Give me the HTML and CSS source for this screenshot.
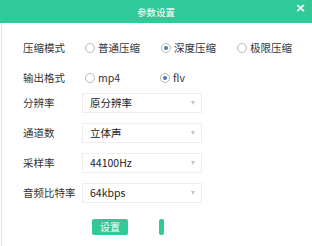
FILE: index.html
```html
<!DOCTYPE html>
<html lang="zh-CN">
<head>
    <meta charset="UTF-8">
    <title>参数设置</title>
    <link rel="stylesheet" href="styles.css">
</head>
<body>
    <div class="dialog">
        <header class="dialog-head">
            <span class="dialog-title">参数设置</span>
            <span class="dialog-close">&times;</span>
        </header>
        <main class="dialog-body">
            <div class="row">
                <label class="row-label">压缩模式</label>
                <div class="radios">
                    <span class="radio"><i class="dot"></i>普通压缩</span>
                    <span class="radio"><i class="dot checked"></i>深度压缩</span>
                    <span class="radio"><i class="dot"></i>极限压缩</span>
                </div>
            </div>
            <div class="row row-tight">
                <label class="row-label">输出格式</label>
                <div class="radios">
                    <span class="radio radio-fmt"><i class="dot"></i>mp4</span>
                    <span class="radio"><i class="dot checked"></i>flv</span>
                </div>
            </div>
            <div class="row">
                <label class="row-label">分辨率</label>
                <div class="select">原分辨率<i class="caret"></i></div>
            </div>
            <div class="row">
                <label class="row-label">通道数</label>
                <div class="select">立体声<i class="caret"></i></div>
            </div>
            <div class="row">
                <label class="row-label">采样率</label>
                <div class="select">44100Hz<i class="caret"></i></div>
            </div>
            <div class="row">
                <label class="row-label">音频比特率</label>
                <div class="select">64kbps<i class="caret"></i></div>
            </div>
            <div class="actions">
                <button class="btn">设置</button>
                <button class="btn btn-thin"></button>
            </div>
        </main>
    </div>
</body>
</html>
```

FILE: styles.css
```css
* {
    box-sizing: border-box;
}
body {
    margin: 0;
    padding: 0;
    background: #fff;
    font-family: "Noto Sans CJK SC", "Noto Sans", sans-serif;
    font-size: 10.5px;
    color: #333;
}
.dialog {
    width: 312px;
    height: 246px;
    overflow: hidden;
}
.dialog-head {
    position: relative;
    height: 23px;
    background: #2fca98;
    color: #fff;
    text-align: center;
}
.dialog-title {
    display: inline-block;
    font-size: 9.5px;
    line-height: 25px;
}
.dialog-close {
    position: absolute;
    right: 6px;
    top: 1px;
    font-family: "DejaVu Sans", sans-serif;
    font-size: 13px;
    font-weight: bold;
    line-height: 14px;
}
.dialog-body {
    margin-left: 1px;
    border-left: 1px solid #e2e2e2;
    height: 223px;
    padding: 15px 0 0 21px;
    display: flex;
    flex-direction: column;
    gap: 10px;
}
.row {
    display: flex;
    align-items: center;
    height: 20px;
}
.row-tight {
    margin-bottom: -5px;
}
.row-label {
    flex: none;
    width: 59px;
    line-height: 20px;
    white-space: nowrap;
}
.radios {
    flex: none;
    display: flex;
    align-items: center;
    padding-left: 3px;
}
.radio {
    flex: none;
    display: flex;
    align-items: center;
    gap: 3px;
    margin-right: 21px;
    line-height: 20px;
    white-space: nowrap;
}
.radio-fmt {
    width: 75px;
    margin-right: 0;
}
.dot {
    flex: none;
    width: 10px;
    height: 10px;
    border: 1px solid #b9b9b9;
    border-radius: 50%;
    background: #fff;
    position: relative;
}
.dot.checked::after {
    content: "";
    position: absolute;
    left: 2px;
    top: 2px;
    width: 4px;
    height: 4px;
    border-radius: 50%;
    background: #4f7aa8;
}
.select {
    position: relative;
    flex: none;
    width: 120px;
    height: 20px;
    border: 1px solid #eeeeee;
    padding-left: 7px;
    line-height: 18px;
    color: #222;
}
.caret {
    position: absolute;
    right: 6px;
    top: 7px;
    width: 0;
    height: 0;
    border-left: 2px solid transparent;
    border-right: 2px solid transparent;
    border-top: 4px solid #c4c4c4;
}
.actions {
    display: flex;
    gap: 31px;
    padding-left: 69px;
    margin-top: 6px;
}
.btn {
    appearance: none;
    border: 0;
    border-radius: 2px;
    background: #2fca98;
    color: #fff;
    font-family: inherit;
    font-size: 10px;
    width: 36px;
    height: 16px;
    padding: 0;
    line-height: 16px;
}
.btn-thin {
    width: 5px;
}
```
